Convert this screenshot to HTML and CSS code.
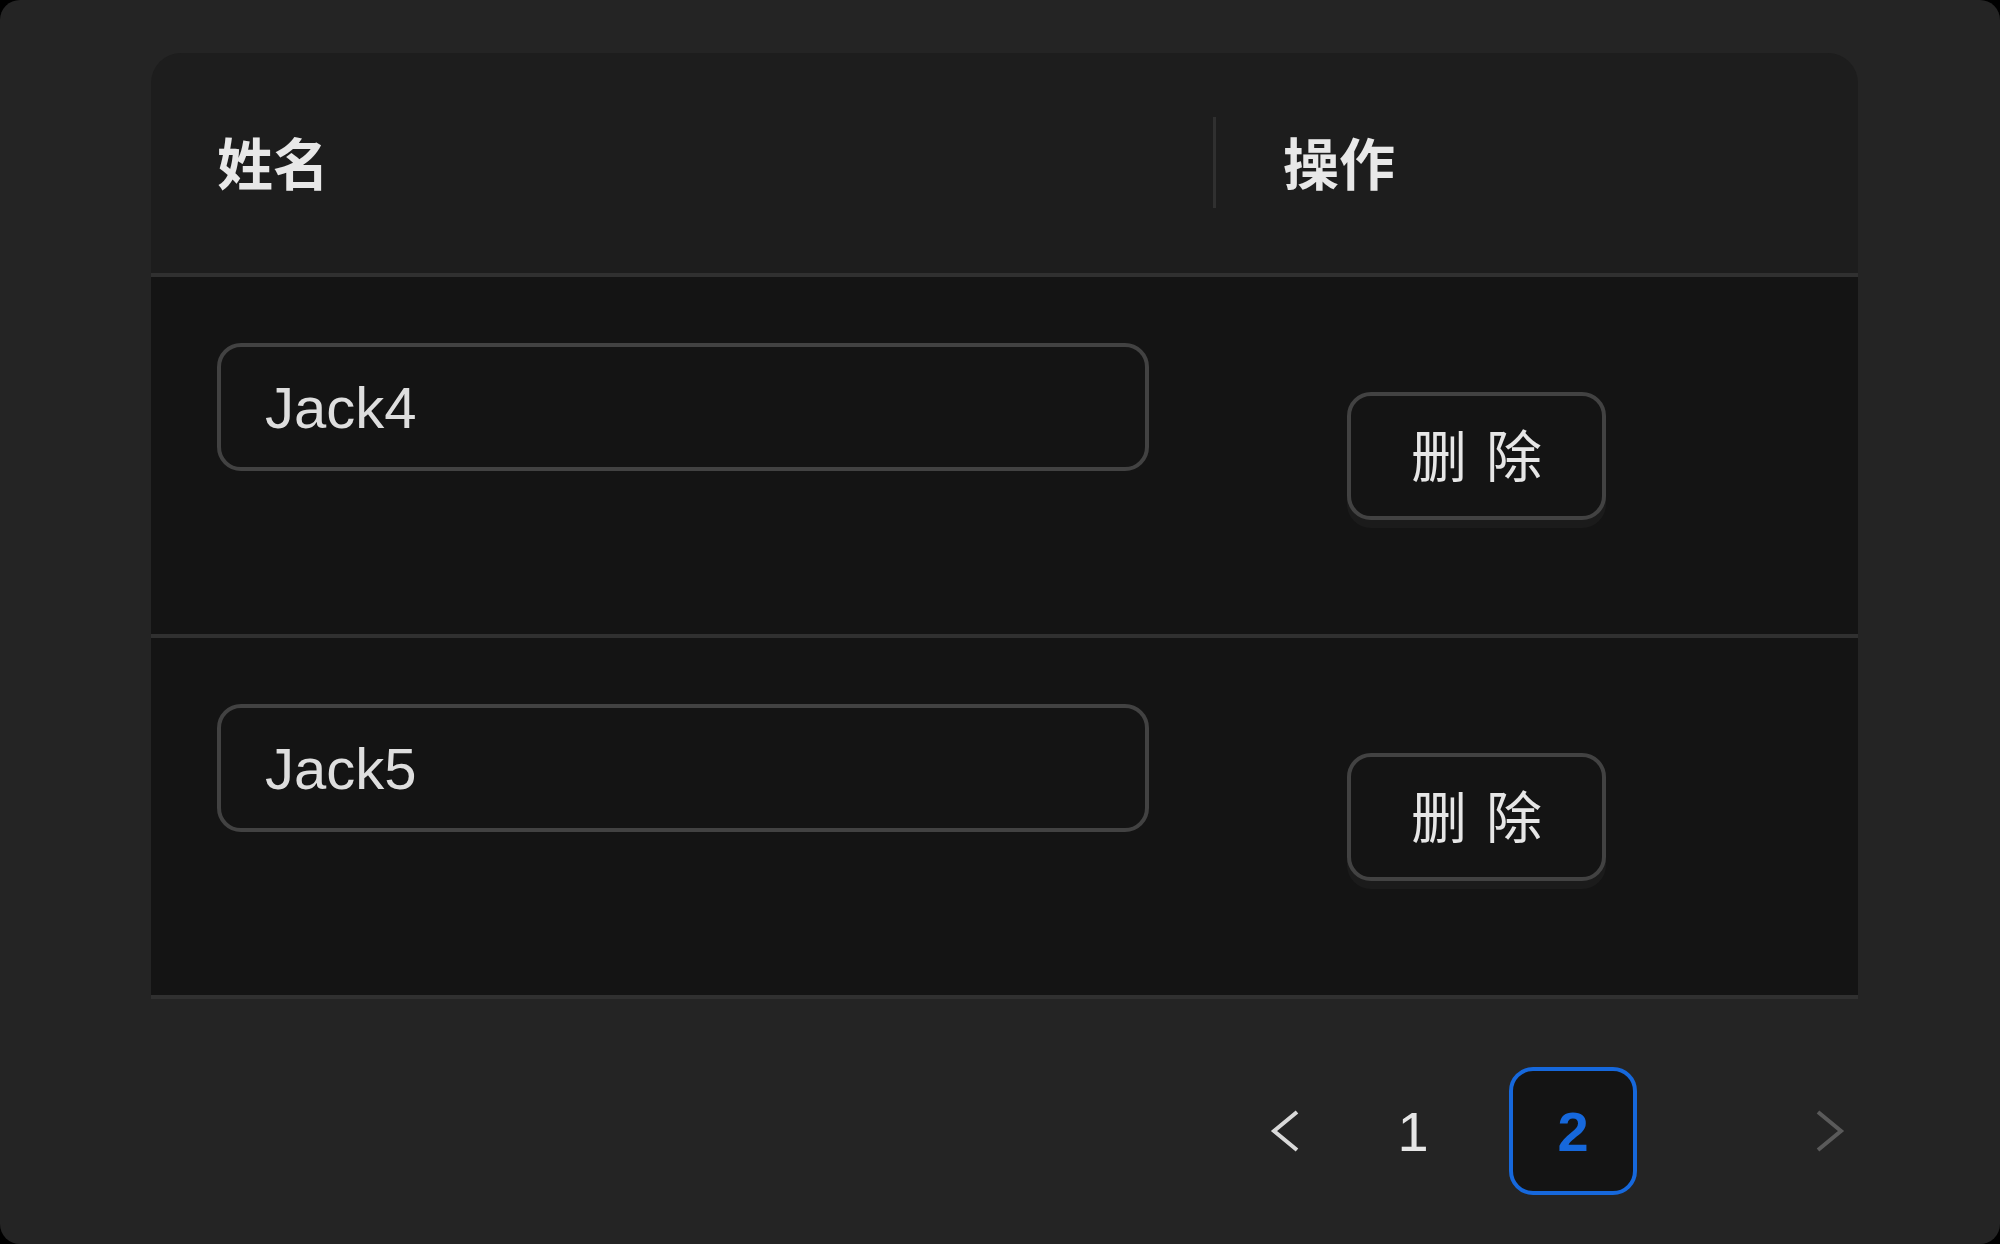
FILE: index.html
```html
<!DOCTYPE html>
<html lang="zh-CN">
<head>
<meta charset="utf-8">
<title>Table</title>
<link rel="stylesheet" href="styles.css">
</head>
<body>
<div class="frame">
  <div class="table">
    <div class="thead">
      <div class="th">姓名</div>
      <div class="th th-sep">操作</div>
    </div>
    <div class="tr">
      <div class="td td-name"><input class="input" type="text" value="Jack4"></div>
      <div class="td td-action"><button class="btn" type="button"><span>删除</span></button></div>
    </div>
    <div class="tr">
      <div class="td td-name"><input class="input" type="text" value="Jack5"></div>
      <div class="td td-action"><button class="btn" type="button"><span>删除</span></button></div>
    </div>
  </div>
  <div class="pager">
    <div class="pg-item pg-prev">
      <svg class="chev" viewBox="0 0 32 44" width="32" height="44"><polyline points="28,3 5,22 28,41" fill="none" stroke="currentColor" stroke-width="4" stroke-linejoin="miter"/></svg>
    </div>
    <div class="pg-item pg-num">1</div>
    <div class="pg-item pg-num pg-active">2</div>
    <div class="pg-item pg-next">
      <svg class="chev" viewBox="0 0 32 44" width="32" height="44"><polyline points="4,3 27,22 4,41" fill="none" stroke="currentColor" stroke-width="4" stroke-linejoin="miter"/></svg>
    </div>
  </div>
</div>
</body>
</html>
```

FILE: styles.css
```css
html {
  background: #000;
}
body {
  margin: 0;
  font-family: "Liberation Sans", "Noto Sans CJK SC", sans-serif;
}
.frame {
  box-sizing: border-box;
  min-height: 1244px;
  background: #242424;
  border-radius: 20px;
  padding: 53px 142px 0 151px;
}
.table {
  width: 1707px;
}
.thead {
  display: grid;
  grid-template-columns: 1062px 1fr;
  height: 224px;
  box-sizing: border-box;
  background: #1d1d1d;
  border-radius: 30px 30px 0 0;
  border-bottom: 4px solid #303030;
}
.th {
  position: relative;
  display: flex;
  align-items: center;
  padding: 0 64px 0 66px;
  padding-bottom: 6px;
  font-size: 56px;
  font-weight: 700;
  color: #e8e8e8;
}
.th-sep {
  padding-left: 70px;
}
.th-sep::before {
  content: "";
  position: absolute;
  left: 0;
  top: 64px;
  width: 3px;
  height: 91px;
  background: #303030;
}
.tr {
  display: grid;
  grid-template-columns: 1062px 1fr;
  height: 361px;
  box-sizing: border-box;
  background: #141414;
  border-bottom: 4px solid #303030;
}
.td-name {
  padding: 66px 64px 0 66px;
}
.input {
  display: block;
  box-sizing: border-box;
  width: 932px;
  height: 128px;
  margin: 0;
  padding: 0 44px;
  border: 4px solid #424242;
  border-radius: 24px;
  background: #141414;
  color: #dedede;
  font-family: "Liberation Sans", "Noto Sans CJK SC", sans-serif;
  font-size: 58px;
  outline: none;
}
.td-action {
  display: flex;
  align-items: center;
  padding-left: 134px;
}
.btn {
  box-sizing: border-box;
  width: 259px;
  height: 128px;
  padding: 0 0 6px;
  border: 4px solid #424242;
  border-radius: 24px;
  background: #141414;
  color: #e6e6e6;
  font-family: "Noto Sans CJK SC", sans-serif;
  font-size: 56px;
  line-height: 1;
  white-space: nowrap;
  box-shadow: 0 8px 0 rgba(255, 255, 255, 0.03);
  cursor: pointer;
}
.btn span {
  letter-spacing: 0.34em;
  margin-right: -0.34em;
}
.pager {
  display: flex;
  justify-content: flex-end;
  align-items: center;
  margin-top: 68px;
  margin-right: -36px;
}
.pg-item {
  box-sizing: border-box;
  width: 128px;
  height: 128px;
  display: flex;
  align-items: center;
  justify-content: center;
  font-size: 56px;
  color: #e6e6e6;
}
.pg-prev {
  color: #d9d9d9;
}
.pg-num + .pg-num {
  margin-left: 32px;
}
.pg-active {
  border: 4px solid #1668dc;
  border-radius: 24px;
  background: #141414;
  color: #1668dc;
  font-weight: 700;
}
.pg-next {
  margin-left: 129px;
  color: #5a5a5a;
}
.chev {
  display: block;
}
```
